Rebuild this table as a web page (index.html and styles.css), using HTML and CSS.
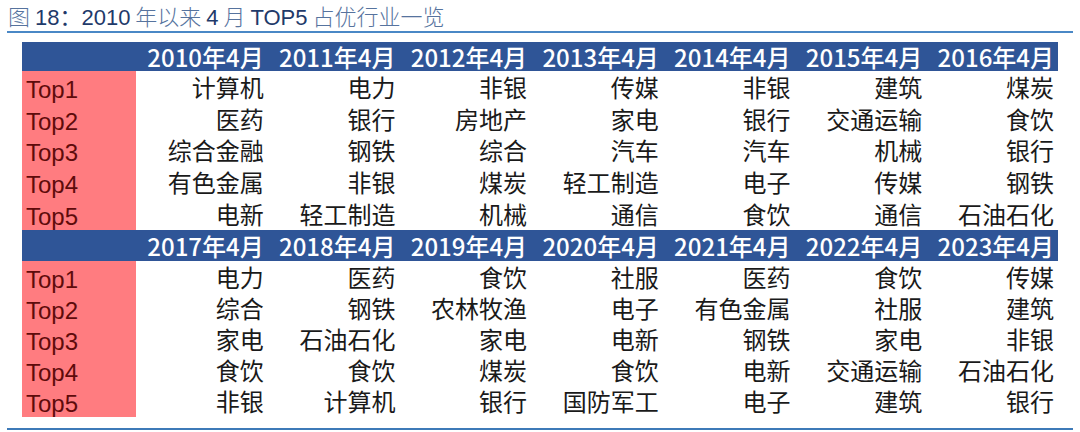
FILE: index.html
```html
<!DOCTYPE html>
<html lang="zh">
<head>
<meta charset="utf-8">
<link rel="stylesheet" href="styles.css">
</head>
<body>
<div class="page">
  <div class="title"><span class="cj">图</span> <span class="lt">18：2010</span> <span class="cj">年以来</span> <span class="lt">4</span> <span class="cj">月</span> <span class="lt">TOP5</span> <span class="cj">占优行业一览</span></div>
  <div class="rule"></div>
  <table class="grid">
    <colgroup><col class="c0"><col><col><col><col><col><col><col></colgroup>
    <tr class="head h1"><td></td><td>2010年4月</td><td>2011年4月</td><td>2012年4月</td><td>2013年4月</td><td>2014年4月</td><td>2015年4月</td><td>2016年4月</td></tr>
    <tr class="row r1"><td class="lab">Top1</td><td>计算机</td><td>电力</td><td>非银</td><td>传媒</td><td>非银</td><td>建筑</td><td>煤炭</td></tr>
    <tr class="row r1"><td class="lab">Top2</td><td>医药</td><td>银行</td><td>房地产</td><td>家电</td><td>银行</td><td>交通运输</td><td>食饮</td></tr>
    <tr class="row r1"><td class="lab">Top3</td><td>综合金融</td><td>钢铁</td><td>综合</td><td>汽车</td><td>汽车</td><td>机械</td><td>银行</td></tr>
    <tr class="row r1"><td class="lab">Top4</td><td>有色金属</td><td>非银</td><td>煤炭</td><td>轻工制造</td><td>电子</td><td>传媒</td><td>钢铁</td></tr>
    <tr class="row r1"><td class="lab">Top5</td><td>电新</td><td>轻工制造</td><td>机械</td><td>通信</td><td>食饮</td><td>通信</td><td>石油石化</td></tr>
    <tr class="head h2"><td></td><td>2017年4月</td><td>2018年4月</td><td>2019年4月</td><td>2020年4月</td><td>2021年4月</td><td>2022年4月</td><td>2023年4月</td></tr>
    <tr class="row r2"><td class="lab">Top1</td><td>电力</td><td>医药</td><td>食饮</td><td>社服</td><td>医药</td><td>食饮</td><td>传媒</td></tr>
    <tr class="row r2"><td class="lab">Top2</td><td>综合</td><td>钢铁</td><td>农林牧渔</td><td>电子</td><td>有色金属</td><td>社服</td><td>建筑</td></tr>
    <tr class="row r2"><td class="lab">Top3</td><td>家电</td><td>石油石化</td><td>家电</td><td>电新</td><td>钢铁</td><td>家电</td><td>非银</td></tr>
    <tr class="row r2"><td class="lab">Top4</td><td>食饮</td><td>食饮</td><td>煤炭</td><td>食饮</td><td>电新</td><td>交通运输</td><td>石油石化</td></tr>
    <tr class="row r2"><td class="lab">Top5</td><td>非银</td><td>计算机</td><td>银行</td><td>国防军工</td><td>电子</td><td>建筑</td><td>银行</td></tr>
  </table>
  <div class="rule bottom"></div>
</div>
</body>
</html>
```
FILE: styles.css
```css
html, body {
  margin: 0;
  padding: 0;
  background: #ffffff;
}
.page {
  width: 1080px;
  height: 432px;
  overflow: hidden;
  font-family: "Noto Sans CJK SC", "Noto Sans", sans-serif;
}
.title {
  height: 31px;
  padding-left: 8px;
  font-size: 22px;
  line-height: 31px;
  white-space: pre;
}
.title .cj {
  color: #56739e;
  font-weight: 300;
}
.title .lt {
  color: #1f3a6a;
  font-family: "Liberation Sans", "Noto Sans CJK SC", sans-serif;
}
.rule {
  margin-left: 7px;
  width: 1066px;
  height: 2px;
  background: #4a88c6;
}
.grid {
  margin: 9px 0 0 22px;
  width: 1036px;
  border-collapse: collapse;
  table-layout: fixed;
  font-size: 24px;
}
.grid col.c0 {
  width: 114px;
}
.grid td {
  padding: 0 4px 0 0;
  text-align: right;
  vertical-align: middle;
  white-space: nowrap;
  line-height: 24px;
  color: #1a1a1a;
}
.head td {
  background: #2f5597;
  color: #ffffff;
  font-weight: 500;
  padding-top: 1px;
}
.h1 {
  height: 29px;
}
.h2 {
  height: 31px;
}
.r1 {
  height: 31.8px;
}
.r2 {
  height: 31.2px;
}
.grid td.lab {
  background: #ff7c80;
  color: #5e0b0b;
  text-align: left;
  padding: 6px 0 0 4px;
  font-family: "Liberation Sans", "Noto Sans", sans-serif;
}
.rule.bottom {
  margin-top: 11px;
  background: #3e7ab8;
}
```
